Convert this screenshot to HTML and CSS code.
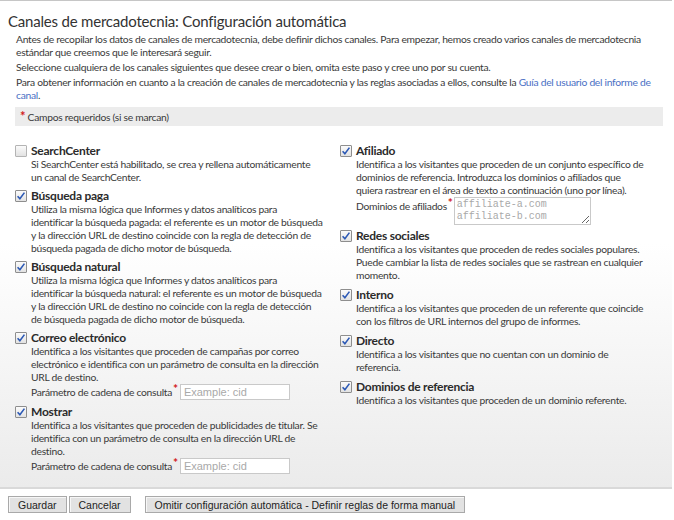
FILE: index.html
```html
<!DOCTYPE html>
<html lang="es">
<head>
<meta charset="utf-8">
<title>Canales de mercadotecnia</title>
<link rel="stylesheet" href="styles.css">
</head>
<body>
<div class="panel">
  <h1 class="title">Canales de mercadotecnia: Configuración automática</h1>
  <div class="intro">
    <p>Antes de recopilar los datos de canales de mercadotecnia, debe definir dichos canales. Para empezar, hemos creado varios canales de mercadotecnia<br>estándar que creemos que le interesará seguir.</p>
    <p>Seleccione cualquiera de los canales siguientes que desee crear o bien, omita este paso y cree uno por su cuenta.</p>
    <p>Para obtener información en cuanto a la creación de canales de mercadotecnia y las reglas asociadas a ellos, consulte la <a class="link" href="#">Guía del usuario del informe de<br>canal</a>.</p>
  </div>
  <div class="required"><span class="star">*</span> Campos requeridos (si se marcan)</div>

  <div class="columns">
    <div class="col">
      <div class="item">
        <div class="item-head"><span class="cb"></span><span class="item-label">SearchCenter</span></div>
        <div class="item-desc">Si SearchCenter está habilitado, se crea y rellena automáticamente<br>un canal de SearchCenter.</div>
      </div>
      <div class="item">
        <div class="item-head"><span class="cb checked"><svg viewBox="0 0 12 12" width="12" height="12"><path d="M2.6 6.2 L4.9 8.8 L9.4 2.6" /></svg></span><span class="item-label">Búsqueda paga</span></div>
        <div class="item-desc">Utiliza la misma lógica que Informes y datos analíticos para<br>identificar la búsqueda pagada: el referente es un motor de búsqueda<br>y la dirección URL de destino coincide con la regla de detección de<br>búsqueda pagada de dicho motor de búsqueda.</div>
      </div>
      <div class="item">
        <div class="item-head"><span class="cb checked"><svg viewBox="0 0 12 12" width="12" height="12"><path d="M2.6 6.2 L4.9 8.8 L9.4 2.6" /></svg></span><span class="item-label">Búsqueda natural</span></div>
        <div class="item-desc">Utiliza la misma lógica que Informes y datos analíticos para<br>identificar la búsqueda natural: el referente es un motor de búsqueda<br>y la dirección URL de destino no coincide con la regla de detección<br>de búsqueda pagada de dicho motor de búsqueda.</div>
      </div>
      <div class="item">
        <div class="item-head"><span class="cb checked"><svg viewBox="0 0 12 12" width="12" height="12"><path d="M2.6 6.2 L4.9 8.8 L9.4 2.6" /></svg></span><span class="item-label">Correo electrónico</span></div>
        <div class="item-desc">Identifica a los visitantes que proceden de campañas por correo<br>electrónico e identifica con un parámetro de consulta en la dirección<br>URL de destino.</div>
        <div class="param"><span class="param-label">Parámetro de cadena de consulta<span class="star sup">*</span></span><input class="field" type="text" placeholder="Example: cid"></div>
      </div>
      <div class="item">
        <div class="item-head"><span class="cb checked"><svg viewBox="0 0 12 12" width="12" height="12"><path d="M2.6 6.2 L4.9 8.8 L9.4 2.6" /></svg></span><span class="item-label">Mostrar</span></div>
        <div class="item-desc">Identifica a los visitantes que proceden de publicidades de titular. Se<br>identifica con un parámetro de consulta en la dirección URL de<br>destino.</div>
        <div class="param"><span class="param-label">Parámetro de cadena de consulta<span class="star sup">*</span></span><input class="field" type="text" placeholder="Example: cid"></div>
      </div>
    </div>

    <div class="col col-right">
      <div class="item item-affiliate">
        <div class="item-head"><span class="cb checked"><svg viewBox="0 0 12 12" width="12" height="12"><path d="M2.6 6.2 L4.9 8.8 L9.4 2.6" /></svg></span><span class="item-label">Afiliado</span></div>
        <div class="item-desc">Identifica a los visitantes que proceden de un conjunto específico de<br>dominios de referencia. Introduzca los dominios o afiliados que<br>quiera rastrear en el área de texto a continuación (uno por línea).</div>
        <div class="param param-area"><span class="param-label">Dominios de afiliados<span class="star sup">*</span></span><textarea class="area" placeholder="affiliate-a.com&#10;affiliate-b.com"></textarea></div>
      </div>
      <div class="item">
        <div class="item-head"><span class="cb checked"><svg viewBox="0 0 12 12" width="12" height="12"><path d="M2.6 6.2 L4.9 8.8 L9.4 2.6" /></svg></span><span class="item-label">Redes sociales</span></div>
        <div class="item-desc">Identifica a los visitantes que proceden de redes sociales populares.<br>Puede cambiar la lista de redes sociales que se rastrean en cualquier<br>momento.</div>
      </div>
      <div class="item">
        <div class="item-head"><span class="cb checked"><svg viewBox="0 0 12 12" width="12" height="12"><path d="M2.6 6.2 L4.9 8.8 L9.4 2.6" /></svg></span><span class="item-label">Interno</span></div>
        <div class="item-desc">Identifica a los visitantes que proceden de un referente que coincide<br>con los filtros de URL internos del grupo de informes.</div>
      </div>
      <div class="item">
        <div class="item-head"><span class="cb checked"><svg viewBox="0 0 12 12" width="12" height="12"><path d="M2.6 6.2 L4.9 8.8 L9.4 2.6" /></svg></span><span class="item-label">Directo</span></div>
        <div class="item-desc">Identifica a los visitantes que no cuentan con un dominio de<br>referencia.</div>
      </div>
      <div class="item">
        <div class="item-head"><span class="cb checked"><svg viewBox="0 0 12 12" width="12" height="12"><path d="M2.6 6.2 L4.9 8.8 L9.4 2.6" /></svg></span><span class="item-label">Dominios de referencia</span></div>
        <div class="item-desc">Identifica a los visitantes que proceden de un dominio referente.</div>
      </div>
    </div>
  </div>
</div>
<div class="actions">
  <button class="btn" type="button">Guardar</button><button class="btn" type="button">Cancelar</button><button class="btn btn-wide" type="button">Omitir configuración automática - Definir reglas de forma manual</button>
</div>
</body>
</html>
```

FILE: styles.css
```css
* { box-sizing: border-box; }

body {
  margin: 0;
  background: #fff;
  color: #3a3a3a;
  font-family: Lato, "Liberation Sans", sans-serif;
}

.panel {
  width: 672px;
  border-top: 1px solid #c6c6c6;
  border-bottom: 2px solid #d9d9d9;
  background: linear-gradient(to bottom, #ffffff 0%, #ffffff 50%, #ebebeb 100%);
  padding-bottom: 9px;
}

.title {
  margin: 10px 0 2px 8px;
  font-size: 15px;
  line-height: 20px;
  font-weight: 400;
  letter-spacing: -0.2px;
  color: #333;
}

.intro {
  padding-left: 16px;
  font-size: 10.3px;
  letter-spacing: -0.28px;
  line-height: 13px;
}

.intro p {
  margin: 0 0 2px;
}

.link {
  color: #4a6fc4;
  text-decoration: none;
}

.required {
  margin: 5px 9px 0 15px;
  height: 19px;
  background: #ececec;
  font-size: 10.3px;
  letter-spacing: -0.28px;
  line-height: 19px;
  padding-left: 5px;
}

.star {
  color: #d21a1a;
  font-size: 13px;
  font-weight: 700;
}

.star.sup {
  font-size: 12px;
  vertical-align: 3px;
  line-height: 0;
  margin-left: 1px;
}

.columns {
  display: grid;
  grid-template-columns: 325px 1fr;
  padding-left: 15px;
  margin-top: 17px;
}

.item {
  margin-bottom: 4px;
}

.col-right .item {
  margin-bottom: 5px;
}

.col-right .item-affiliate {
  margin-bottom: 3px;
}

.item-head {
  display: flex;
  align-items: center;
  gap: 4px;
  height: 15px;
}

.cb {
  width: 12px;
  height: 12px;
  border: 1px solid #b4b4b4;
  border-radius: 1px;
  background: linear-gradient(to bottom, #fbfbfb, #e2e2e2);
  display: inline-flex;
  flex: none;
}

.cb.checked {
  border-color: #8e8e8e;
}

.cb svg {
  margin: -1px;
}

.cb path {
  fill: none;
  stroke: #2c59b5;
  stroke-width: 1.6;
}

.item-label {
  font-size: 12px;
  font-weight: 700;
  letter-spacing: -0.25px;
  color: #2b2b2b;
  line-height: 15px;
}

.item-desc {
  padding-left: 16px;
  font-size: 10.3px;
  letter-spacing: -0.28px;
  line-height: 13px;
  white-space: nowrap;
}

.param {
  display: flex;
  align-items: center;
  padding-left: 16px;
  font-size: 10.3px;
  letter-spacing: -0.28px;
}

.param-label {
  white-space: nowrap;
}

.field {
  width: 110px;
  height: 16px;
  margin-left: 2px;
  border: 1px solid #c9c9c9;
  font-family: "Liberation Sans", sans-serif;
  font-size: 11px;
  letter-spacing: 0;
  padding: 0 3px;
  background: #fff;
}

.field::placeholder {
  color: #a9a9a9;
}

.param-area {
  align-items: flex-start;
  margin-top: 0;
}

.param-area .param-label {
  padding-top: 3px;
}

.area {
  display: block;
  width: 137px;
  height: 28px;
  margin-left: 1px;
  border: 1px solid #c9c9c9;
  font-family: "Liberation Mono", monospace;
  font-size: 10px;
  letter-spacing: 0;
  line-height: 12px;
  padding: 1px 2px;
  resize: both;
  overflow: hidden;
  background: #fff;
}

.area::placeholder {
  color: #a9a9a9;
}

.actions {
  display: flex;
  padding: 7px 8px;
}

.btn {
  font-family: "Liberation Sans", sans-serif;
  font-size: 10.5px;
  line-height: 14px;
  height: 17px;
  padding: 0 9px;
  color: #222;
  background: #e2e2e2;
  border: 1px solid #a9a9a9;
  box-shadow: inset 1px 1px 0 #f7f7f7;
  margin-right: 2px;
}

.btn-wide {
  margin-left: 12px;
}
```
